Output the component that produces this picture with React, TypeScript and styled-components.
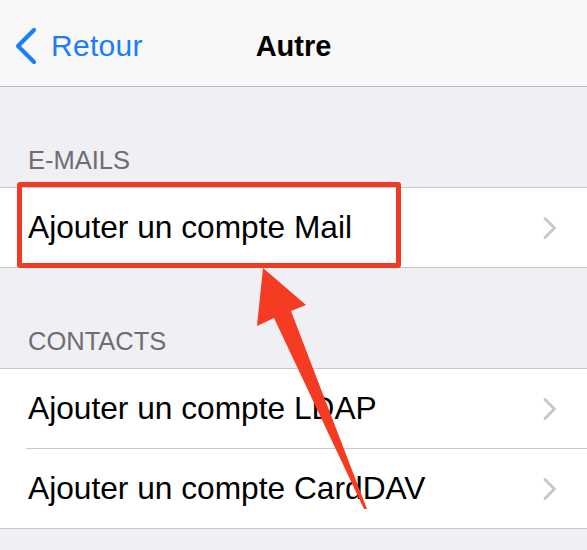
import React from 'react';
import styled, { createGlobalStyle } from 'styled-components';

const GlobalStyle = createGlobalStyle`
    html, body {
        margin: 0;
        padding: 0;
        background: #efeff4;
    }
    body {
        font-family: "Liberation Sans", Arial, sans-serif;
        -webkit-font-smoothing: antialiased;
    }
`

const Screen = styled.div`
    position: relative;
    width: 587px;
    height: 550px;
    overflow: hidden;
    background: #efeff4;
`

const NavBar = styled.div`
    height: 87px;
    box-sizing: border-box;
    padding-top: 6px;
    display: grid;
    grid-template-columns: 1fr auto 1fr;
    align-items: center;
    background: #f8f8f8;
    border-bottom: 1px solid #b9b9bd;
`

const BackButton = styled.div`
    display: flex;
    align-items: center;
    gap: 13px;
    padding-left: 14px;
    color: #1a7ef7;
    font-size: 30px;
    letter-spacing: 0.3px;
`

const Title = styled.div`
    font-size: 29px;
    font-weight: 700;
    color: #000;
`

const SectionHeader = styled.div`
    height: 100px;
    box-sizing: border-box;
    display: flex;
    align-items: flex-end;
    padding: 0 0 14px 28px;
    font-size: 25.5px;
    line-height: 26px;
    color: #6d6d72;
`

const Group = styled.div`
    background: #fff;
    border-top: 1px solid #c8c7cc;
    border-bottom: 1px solid #c8c7cc;
`

const Row = styled.div<{ $divider?: boolean }>`
    position: relative;
    height: 79px;
    display: flex;
    align-items: center;
    justify-content: space-between;
    padding: 0 29px 0 28px;
    font-size: 31.7px;
    color: #000;
    ${p => p.$divider && `
        &::after {
            content: '';
            position: absolute;
            left: 26px;
            right: 0;
            bottom: -1px;
            height: 1px;
            background: #c8c7cc;
        }
        margin-bottom: 1px;
    `}
`

const Highlight = styled.div`
    position: absolute;
    left: 17px;
    top: -6px;
    width: 384px;
    height: 86px;
    box-sizing: border-box;
    border: 5px solid #ef3b24;
    border-radius: 3px;
    pointer-events: none;
`

const Overlay = styled.svg`
    position: absolute;
    left: 0;
    top: 0;
    pointer-events: none;
`

const BackChevron = () => (
    <svg width="24" height="38" viewBox="0 0 24 38">
        <path d="M20 3 L4 19 L20 35" fill="none" stroke="#1a7ef7" strokeWidth="4.2" strokeLinecap="round" strokeLinejoin="round" />
    </svg>
)

const Disclosure = () => (
    <svg width="16" height="24" viewBox="0 0 16 24">
        <path d="M3 2.5 L12.5 12 L3 21.5" fill="none" stroke="#c7c7cc" strokeWidth="3" strokeLinecap="round" strokeLinejoin="round" />
    </svg>
)

export default function App() {
    return (
        <Screen>
            <GlobalStyle />
            <NavBar>
                <BackButton>
                    <BackChevron />
                    Retour
                </BackButton>
                <Title>Autre</Title>
                <div />
            </NavBar>

            <SectionHeader>E-MAILS</SectionHeader>
            <Group>
                <Row>
                    Ajouter un compte Mail
                    <Disclosure />
                    <Highlight />
                </Row>
            </Group>

            <SectionHeader>CONTACTS</SectionHeader>
            <Group>
                <Row $divider>
                    Ajouter un compte LDAP
                    <Disclosure />
                </Row>
                <Row>
                    Ajouter un compte CardDAV
                    <Disclosure />
                </Row>
            </Group>

            <Overlay width="587" height="550" viewBox="0 0 587 550">
                <polygon
                    points="263,268 306,305 291,311 367,509 364,509 274,318 257,326"
                    fill="#f53b21"
                />
            </Overlay>
        </Screen>
    )
}
